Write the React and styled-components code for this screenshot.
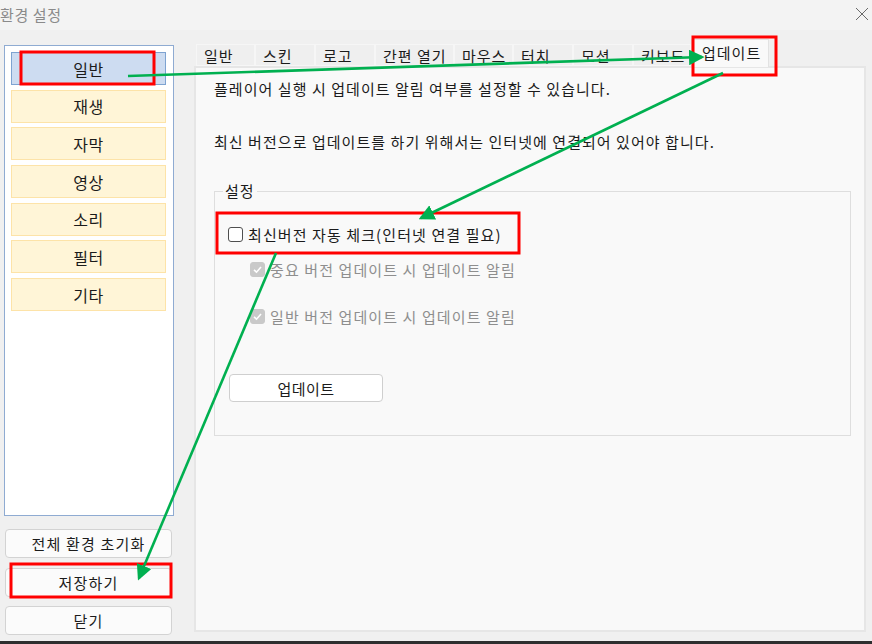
import React from "react";
import styled, { createGlobalStyle } from "styled-components";

const GlobalStyle = createGlobalStyle`
  html, body {
    margin: 0;
    padding: 0;
    background: #f0f0f0;
  }
  * {
    box-sizing: border-box;
  }
`;

const FONT = `"Noto Sans CJK KR", "Noto Sans", sans-serif`;

const Window = styled.div`
  position: relative;
  width: 872px;
  height: 644px;
  background: #f0f0f0;
  display: flex;
  flex-direction: column;
  overflow: hidden;
  font-family: ${FONT};
  color: #1b1b1b;
`;

const TitleBar = styled.div`
  height: 30px;
  flex: none;
  display: flex;
  align-items: center;
  justify-content: space-between;
  background: #f3f3f3;
  padding: 0 2px 2px 0;
`;

const Title = styled.span`
  font-size: 15px;
  color: #8a8a8a;
  margin-left: 0;
  letter-spacing: 0.6px;
`;

const Body = styled.div`
  flex: 1;
  display: flex;
  gap: 20px;
  padding: 0 6px 0 4px;
  min-height: 0;
`;

const LeftColumn = styled.div`
  width: 170px;
  flex: none;
  display: flex;
  flex-direction: column;
  padding-top: 15px;
`;

const ListBox = styled.div`
  height: 471px;
  background: #ffffff;
  border: 1px solid #8fabd2;
  padding: 6px 7px 0 6px;
  display: flex;
  flex-direction: column;
  gap: 4.7px;
`;

const ListItem = styled.div`
  height: 33px;
  flex: none;
  display: flex;
  align-items: center;
  justify-content: center;
  font-size: 16px;
  letter-spacing: 0.5px;
  background: ${(p) => (p.$active ? "#cddcf1" : "#fff5d7")};
  border: 1.5px solid ${(p) => (p.$active ? "#7ea3d1" : "#fde3a8")};
`;

const ButtonStack = styled.div`
  display: flex;
  flex-direction: column;
  gap: 9.5px;
  margin-top: 13px;
  padding-left: 1px;
  padding-right: 2px;
`;

const SideButton = styled.button`
  height: 29px;
  font-family: ${FONT};
  font-size: 15px;
  letter-spacing: 1.2px;
  color: #1b1b1b;
  background: #fbfbfb;
  border: 1px solid #d3d3d3;
  border-radius: 4px;
  padding: 0;
`;

const RightColumn = styled.div`
  flex: 1;
  display: flex;
  flex-direction: column;
  padding-top: 10px;
  padding-bottom: 9px;
`;

const TabRow = styled.div`
  height: 26px;
  flex: none;
  display: flex;
  align-items: flex-end;
  padding-left: 2px;
  position: relative;
  z-index: 1;
`;

const Tab = styled.div`
  width: ${(p) => p.$w}px;
  height: ${(p) => (p.$active ? 28 : 22)}px;
  margin-bottom: ${(p) => (p.$active ? -1 : 0)}px;
  flex: none;
  display: flex;
  align-items: ${(p) => (p.$active ? "flex-start" : "center")};
  padding-left: ${(p) => (p.$active ? 10 : 7)}px;
  padding-top: ${(p) => (p.$active ? 2 : 0)}px;
  font-size: 15px;
  letter-spacing: 1px;
  white-space: nowrap;
  overflow: hidden;
  background: ${(p) => (p.$active ? "#f9f9f9" : "#efefef")};
  border: 1px solid ${(p) => (p.$active ? "#e2e2e2" : "#f6f6f6")};
  border-bottom: ${(p) => (p.$active ? "none" : "1px solid #f6f6f6")};
`;

const Panel = styled.div`
  flex: 1;
  background: #f9f9f9;
  border: 2px solid #e6e6e6;
  padding: 11px 13px 0 18px;
  display: flex;
  flex-direction: column;
`;

const Line = styled.div`
  font-size: 15px;
  line-height: 20px;
  height: 20px;
  margin-top: ${(p) => p.$mt || 0}px;
  letter-spacing: 1.05px;
  white-space: nowrap;
`;

const Group = styled.fieldset`
  margin: 29px 0 0 0;
  height: 255px;
  border: 1px solid #dedede;
  padding: 0 0 0 13px;
  display: flex;
  flex-direction: column;
`;

const Legend = styled.legend`
  font-size: 15px;
  line-height: 20px;
  letter-spacing: 1px;
  padding: 0 2px;
  margin-left: -5px;
`;

const CheckRow = styled.label`
  display: flex;
  align-items: center;
  gap: 5px;
  height: 22px;
  font-size: 15px;
  letter-spacing: 1.1px;
  white-space: nowrap;
  margin-top: ${(p) => p.$mt}px;
  margin-left: ${(p) => p.$indent || 0}px;
  color: ${(p) => (p.$disabled ? "#8e8e8e" : "#1b1b1b")};
`;

const Box = styled.span`
  width: 15px;
  height: 15px;
  flex: none;
  border-radius: 3px;
  display: flex;
  align-items: center;
  justify-content: center;
  background: ${(p) => (p.$checked ? "#c9c9c9" : "#ffffff")};
  border: 1px solid ${(p) => (p.$checked ? "#c9c9c9" : "#4f4f4f")};
`;

const UpdateButton = styled.button`
  width: 154px;
  height: 28px;
  margin-top: 47px;
  margin-left: 1px;
  font-family: ${FONT};
  font-size: 15px;
  letter-spacing: 0.5px;
  color: #1b1b1b;
  background: #ffffff;
  border: 1px solid #cfcfcf;
  border-radius: 4px;
  padding: 0;
`;

const Taskbar = styled.div`
  height: 3px;
  flex: none;
  background: #2e2e2e;
`;

const Overlay = styled.svg`
  position: absolute;
  left: 0;
  top: 0;
  z-index: 5;
  width: 872px;
  height: 644px;
  pointer-events: none;
`;

const categories = ["일반", "재생", "자막", "영상", "소리", "필터", "기타"];

const tabs = [
  { label: "일반", w: 59 },
  { label: "스킨", w: 60 },
  { label: "로고", w: 60 },
  { label: "간편 열기", w: 79 },
  { label: "마우스", w: 59 },
  { label: "터치", w: 60 },
  { label: "모션", w: 60 },
  { label: "키보드", w: 58 },
  { label: "업데이트", w: 78, active: true },
];

function Check({ checked }) {
  return (
    <Box $checked={checked}>
      {checked && (
        <svg width="11" height="11" viewBox="0 0 11 11">
          <path d="M2 5.8 L4.5 8.2 L9 3" fill="none" stroke="#fff" strokeWidth="1.6" />
        </svg>
      )}
    </Box>
  );
}

function Annotations() {
  const green = "#00b050";
  const red = "#ff0000";
  return (
    <Overlay viewBox="0 0 872 644">
      <defs>
        <marker id="head" markerWidth="6" markerHeight="6" refX="5" refY="3" orient="auto" markerUnits="strokeWidth">
          <path d="M0 0 L6 3 L0 6 z" fill={green} />
        </marker>
      </defs>
      <rect x="21" y="52" width="133" height="32" fill="none" stroke={red} strokeWidth="3" />
      <rect x="693" y="37" width="83" height="38" fill="none" stroke={red} strokeWidth="3" />
      <rect x="217" y="213" width="302" height="40" fill="none" stroke={red} strokeWidth="3" />
      <rect x="11" y="564" width="160" height="33" fill="none" stroke={red} strokeWidth="3" />
      <line x1="128" y1="76" x2="702" y2="57" stroke={green} strokeWidth="2.6" markerEnd="url(#head)" />
      <line x1="723" y1="73" x2="421" y2="218" stroke={green} strokeWidth="2.6" markerEnd="url(#head)" />
      <line x1="276" y1="253" x2="139" y2="578" stroke={green} strokeWidth="2.6" markerEnd="url(#head)" />
    </Overlay>
  );
}

export default function App() {
  return (
    <>
      <GlobalStyle />
      <Window>
        <TitleBar>
          <Title>환경 설정</Title>
          <svg width="16" height="16" viewBox="0 0 16 16">
            <path d="M2 2 L14 14 M14 2 L2 14" stroke="#6a6a6a" strokeWidth="1" />
          </svg>
        </TitleBar>
        <Body>
          <LeftColumn>
            <ListBox>
              {categories.map((c, i) => (
                <ListItem key={c} $active={i === 0}>
                  {c}
                </ListItem>
              ))}
            </ListBox>
            <ButtonStack>
              <SideButton>전체 환경 초기화</SideButton>
              <SideButton>저장하기</SideButton>
              <SideButton>닫기</SideButton>
            </ButtonStack>
          </LeftColumn>
          <RightColumn>
            <TabRow>
              {tabs.map((t) => (
                <Tab key={t.label} $w={t.w} $active={t.active}>
                  {t.label}
                </Tab>
              ))}
            </TabRow>
            <Panel>
              <Line>플레이어 실행 시 업데이트 알림 여부를 설정할 수 있습니다.</Line>
              <Line $mt={33}>최신 버전으로 업데이트를 하기 위해서는 인터넷에 연결되어 있어야 합니다.</Line>
              <Group>
                <Legend>설정</Legend>
                <CheckRow $mt={22}>
                  <Check />
                  최신버전 자동 체크(인터넷 연결 필요)
                </CheckRow>
                <CheckRow $mt={13} $indent={22} $disabled>
                  <Check checked />
                  중요 버전 업데이트 시 업데이트 알림
                </CheckRow>
                <CheckRow $mt={25} $indent={22} $disabled>
                  <Check checked />
                  일반 버전 업데이트 시 업데이트 알림
                </CheckRow>
                <UpdateButton>업데이트</UpdateButton>
              </Group>
            </Panel>
          </RightColumn>
        </Body>
        <Taskbar />
        <Annotations />
      </Window>
    </>
  );
}
